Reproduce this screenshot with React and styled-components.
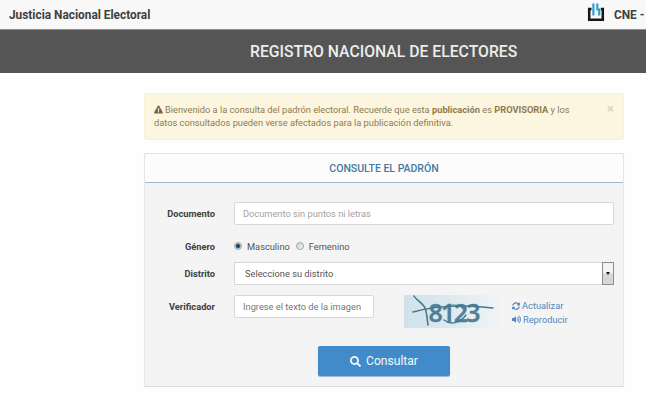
import styled, { createGlobalStyle } from "styled-components";
import {
  FaExclamationTriangle,
  FaSearch,
  FaSyncAlt,
  FaVolumeUp,
} from "react-icons/fa";

const GlobalStyle = createGlobalStyle`
  * {
    box-sizing: border-box;
  }

  body {
    margin: 0;
    background: #fefefe;
    color: #555;
    font-family: Roboto, "Liberation Sans", sans-serif;
    font-size: 9.27px;
    overflow: hidden;
  }
`;

const TopBar = styled.header`
  display: flex;
  align-items: center;
  height: 29px;
  padding-left: 9px;
  background: #f8f8f8;
  color: #404040;
  font-size: 11.85px;
  font-weight: bold;
  line-height: 12px;
  white-space: nowrap;
`;

const Brand = styled.span`
  width: 578px;
`;

const Logo = styled.svg`
  flex: none;
  width: 18px;
  height: 20px;
  margin: -5px 9px 0 0;
`;

const TitleBand = styled.h1`
  display: flex;
  align-items: center;
  height: 44px;
  margin: 0;
  padding: 0 0 0 250px;
  border-top: 1px solid #909090;
  background: #555;
  color: #ededed;
  font-size: 15.75px;
  font-weight: 500;
  white-space: nowrap;
`;

const Content = styled.main`
  width: 480px;
  margin: 20px 0 0 144px;
`;

const Alert = styled.div`
  display: flex;
  justify-content: space-between;
  height: 47px;
  padding: 9px 9px 0 9px;
  border: 1px solid #faf0d4;
  border-radius: 3px;
  background: #fcf6e0;
  color: #8f7a50;
  line-height: 13.4px;
  white-space: nowrap;
`;

const Message = styled.p`
  margin: 0;

  svg {
    margin-right: 2px;
    color: #7c633a;
    vertical-align: -1px;
  }
`;

const Close = styled.span`
  color: #d9d3c0;
  font-size: 13px;
  font-weight: bold;
  line-height: 12px;
`;

const Panel = styled.form`
  height: 234px;
  margin-top: 13px;
  border: 1px solid #e6e6e6;
  border-bottom-color: #dcdcdc;
  background: #f4f4f4;
  box-shadow: 0 1px 1px rgba(0, 0, 0, 0.05);
`;

const PanelTitle = styled.h2`
  height: 29px;
  margin: 0;
  border-bottom: 1px solid #9dbace;
  background: #fcfcfc;
  color: #467a9c;
  font-size: 10.5px;
  font-weight: 500;
  line-height: 30px;
  text-align: center;
`;

const Fields = styled.div`
  padding-top: 19px;
`;

const Row = styled.div`
  display: flex;
  align-items: center;
  height: ${({ $height }) => $height}px;
  margin-bottom: ${({ $gap }) => $gap}px;
`;

const Label = styled.label`
  flex: none;
  width: 70px;
  margin-right: 19px;
  color: #404040;
  font-weight: bold;
  text-align: right;
`;

const Input = styled.input`
  width: ${({ $width }) => $width}px;
  height: 23px;
  padding: 0 8px;
  border: 1px solid #d8d8d8;
  border-radius: 2px;
  background: #fff;
  font: inherit;

  &::placeholder {
    color: ${({ $tone }) => $tone};
    opacity: 1;
  }
`;

const Option = styled.span`
  display: flex;
  align-items: center;
  gap: 5px;
  margin-right: 6px;
`;

const Radio = styled.span`
  width: 8px;
  height: 8px;
  border: 1px solid #a5a5a5;
  border-radius: 50%;
  background: ${({ $checked }) =>
    $checked
      ? "radial-gradient(circle, #17405f 0 1.4px, #4f7f9f 2px, #dfe9ef 3px)"
      : "linear-gradient(135deg, #d0d0d0, #f6f6f6)"};
`;

const Select = styled.div`
  display: flex;
  align-items: center;
  justify-content: space-between;
  width: 380px;
  height: 23px;
  padding-left: 10px;
  border: 1px solid #d8d8d8;
  background: #fff;
  color: #555;
`;

const Arrow = styled.span`
  display: flex;
  align-items: center;
  justify-content: center;
  width: 12px;
  height: 23px;
  margin-right: -1px;
  border: 1px solid #8c8c8c;
  background: linear-gradient(#f3f3f3 48%, #d6d6d6 52%);

  &::after {
    content: "";
    border: 2.5px solid transparent;
    border-top: 3px solid #111;
    border-bottom: 0;
  }
`;

const Captcha = styled.svg`
  flex: none;
  width: 98px;
  height: 33px;
  margin: 9px 10px 0 30px;
  overflow: visible;
`;

const Links = styled.div`
  display: flex;
  flex-direction: column;
  gap: 1px;
  padding-top: 12px;
`;

const Link = styled.a`
  display: flex;
  align-items: center;
  gap: 2px;
  height: 13px;
  color: #4e88be;
`;

const Submit = styled.button`
  display: flex;
  align-items: center;
  justify-content: center;
  gap: 5px;
  width: 132px;
  height: 30px;
  margin: 28px 0 0 173px;
  padding: 0;
  border: 0;
  border-radius: 2px;
  background: #428bca;
  box-shadow: 0 1px 1px #9eb5c9;
  color: #f4f9fd;
  font-family: inherit;
  font-size: 12.1px;
`;

const CneLogo = () => (
  <Logo viewBox="0 0 18 20">
    <path
      d="M4.5 7H2.2V17.7H15.8V7H13.8"
      fill="none"
      stroke="#161616"
      strokeWidth="2.5"
    />
    <path
      d="M6.4 1.5V13.5M10.3 1.5V7.5H12.2V13.5"
      fill="none"
      stroke="#2f9fd0"
      strokeWidth="2.2"
    />
  </Logo>
);

const CaptchaImage = () => (
  <Captcha viewBox="0 0 98 33">
    <defs>
      <linearGradient id="captcha-bg">
        <stop offset="0" stopColor="#cfe2ec" />
        <stop offset="0.45" stopColor="#dce9ef" />
        <stop offset="1" stopColor="#f2f4f5" />
      </linearGradient>
    </defs>
    <rect width="98" height="33" fill="url(#captcha-bg)" />
    <text
      x="24.5"
      y="27"
      fill="#4f8096"
      fontFamily="Noto Sans, sans-serif"
      fontSize="25"
      fontWeight="600"
      letterSpacing="-1.7"
      stroke="#4f8096"
      strokeWidth="0.3"
    >
      8123
    </text>
    <g fill="none" stroke="#457990" strokeLinecap="round">
      <path d="M9 17C30 11 55 9 89 13" strokeWidth="1.4" />
      <path d="M10 1C12 5 19 8 21 13S23 24 24 30" strokeWidth="1.6" />
      <path d="M40 25C47 31 57 27 62 20" strokeWidth="1.4" />
      <path d="M44 11C50 9 57 10 59 14" strokeWidth="1.2" />
    </g>
  </Captcha>
);

const App = () => {
  return (
    <>
      <GlobalStyle />
      <TopBar>
        <Brand>Justicia Nacional Electoral</Brand>
        <CneLogo />
        <span>CNE -</span>
      </TopBar>
      <TitleBand>REGISTRO NACIONAL DE ELECTORES</TitleBand>
      <Content>
        <Alert>
          <Message>
            <FaExclamationTriangle size={9} />
            Bienvenido a la consulta del padrón electoral. Recuerde que esta{" "}
            <b>publicación</b> es <b>PROVISORIA</b> y los
            <br />
            datos consultados pueden verse afectados para la publicación
            definitiva.
          </Message>
          <Close>×</Close>
        </Alert>
        <Panel>
          <PanelTitle>CONSULTE EL PADRÓN</PanelTitle>
          <Fields>
            <Row $height={23} $gap={15}>
              <Label>Documento</Label>
              <Input
                $width={380}
                $tone="#a2a2a2"
                placeholder="Documento sin puntos ni letras"
              />
            </Row>
            <Row $height={12} $gap={10}>
              <Label>Género</Label>
              <Option>
                <Radio $checked />
                Masculino
              </Option>
              <Option>
                <Radio />
                Femenino
              </Option>
            </Row>
            <Row $height={23} $gap={10}>
              <Label>Distrito</Label>
              <Select>
                Seleccione su distrito
                <Arrow />
              </Select>
            </Row>
            <Row $height={23} $gap={0}>
              <Label>Verificador</Label>
              <Input
                $width={140}
                $tone="#777"
                placeholder="Ingrese el texto de la imagen"
              />
              <CaptchaImage />
              <Links>
                <Link>
                  <FaSyncAlt size={8} />
                  Actualizar
                </Link>
                <Link>
                  <FaVolumeUp size={9} />
                  Reproducir
                </Link>
              </Links>
            </Row>
          </Fields>
          <Submit type="button">
            <FaSearch size={11} />
            Consultar
          </Submit>
        </Panel>
      </Content>
    </>
  );
};

export default App;
